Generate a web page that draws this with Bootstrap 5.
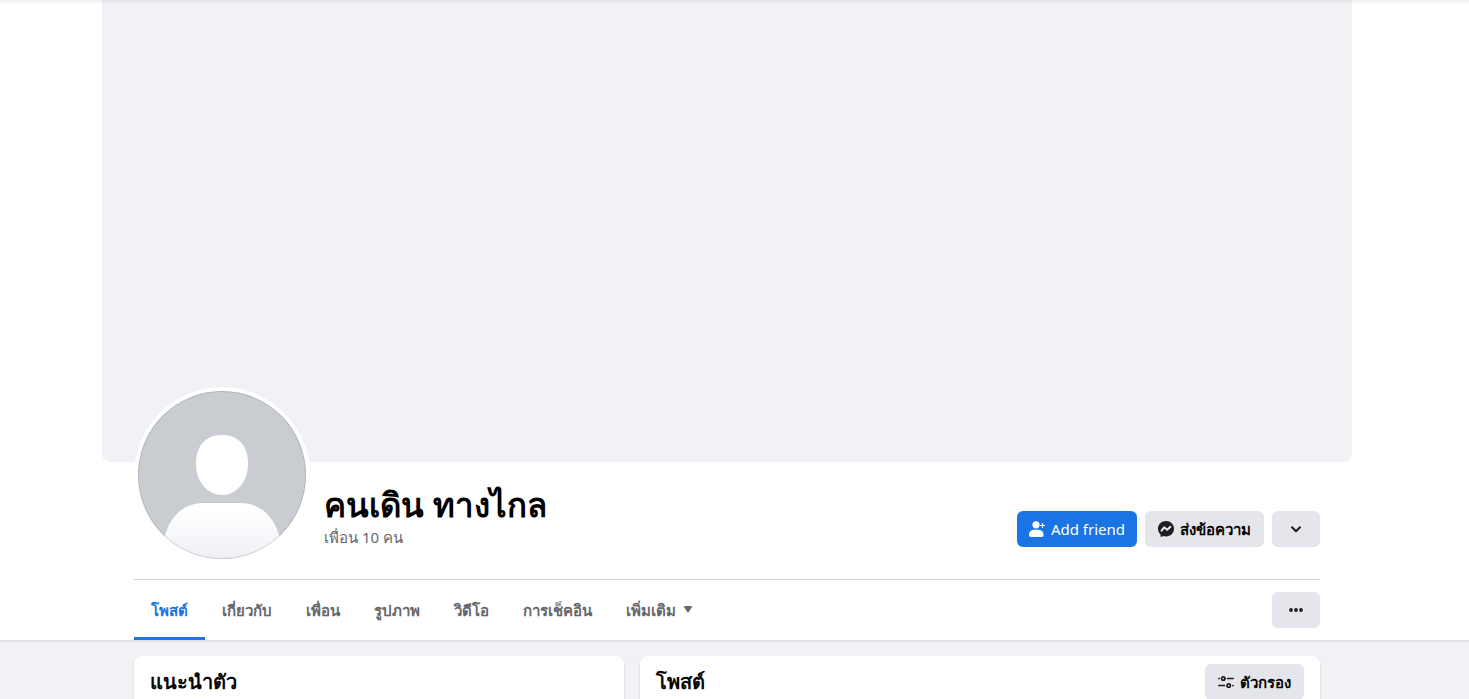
<!DOCTYPE html>
<html lang="th">
<head>
<meta charset="utf-8">
<meta name="viewport" content="width=device-width, initial-scale=1">
<title>คนเดิน ทางไกล</title>
<link href="https://cdn.jsdelivr.net/npm/bootstrap@5.3.0/dist/css/bootstrap.min.css" rel="stylesheet">
<style>
  body { font-family: "Noto Sans", sans-serif; background: #f0f2f5; color: #050505; font-size: 15px; line-height: 20px; }
  .page-shell { position: relative; }
  .page-shell::before { content: ""; position: absolute; inset: 0 0 auto 0; height: 4px; background: linear-gradient(rgba(0,0,0,.07), rgba(0,0,0,0)); }
  .profile-top { background: #fff; border-bottom: 1px solid #dcdee2; box-shadow: 0 1px 1px rgba(0,0,0,.04); padding-right: 15px; }
  .cover-photo { max-width: 1250px; height: 462px; background: #f0f2f5; border-radius: 0 0 8px 8px; }
  .inner-col { max-width: 1186px; }
  .profile-row { gap: 14px; padding-bottom: 16px; border-bottom: 1px solid #ced0d4; }
  .avatar-ring { width: 176px; height: 176px; margin-top: -75px; border: 4px solid #fff; border-radius: 50%; background: #fff; position: relative; }
  .profile-name { font-size: 33px; line-height: 40px; font-weight: 700; color: #000; margin-bottom: 2px; }
  .friend-count { color: #65676b; }
  .friend-count:hover { color: #65676b; }
  .name-block { padding-bottom: 16px; }
  .fb-btn { height: 36px; padding: 0 12px 1px; border: 0; border-radius: 6px; font-size: 15px; line-height: 20px; gap: 6px; white-space: nowrap; }
  .fb-blue { background: #1b74e4; color: #fff; }
  .fb-blue:hover { background: #1a6ed8; color: #fff; }
  .fb-grey { background: #e4e6eb; color: #050505; font-weight: 700; padding: 0 13px; }
  .fb-grey:hover { background: #d8dadf; }
  .fb-square { width: 48px; }
  .profile-tabs .nav-link { height: 60px; padding: 2px 17px 0; border-bottom: 3px solid transparent; color: #65676b; font-weight: 600; display: flex; align-items: center; gap: 8px; }
  .profile-tabs .nav-link.active { color: #1b74e4; border-color: #1b74e4; }
  .feed-grid { display: grid; grid-template-columns: 49fr 68fr; gap: 16px; padding-top: 15px; }
  .feed-shell { padding-right: 15px; }
  .panel-card { background: #fff; border-radius: 8px; box-shadow: 0 1px 2px rgba(0,0,0,.2); min-height: 96px; padding: 8px 16px; }
  .panel-title { font-size: 20px; line-height: 36px; font-weight: 700; color: #050505; }
</style>
</head>
<body>
<div class="page-shell vh-100 overflow-hidden">
  <header class="profile-top">
    <div class="cover-photo mx-auto"></div>
    <div class="inner-col mx-auto">
      <div class="profile-row d-flex align-items-end">
        <div class="avatar-ring flex-shrink-0">
          <svg class="d-block" width="168" height="168" viewBox="0 0 168 168" role="img" aria-label="รูปโปรไฟล์">
            <defs>
              <linearGradient id="bodyFade" x1="0" y1="0" x2="0" y2="1"><stop offset="0.1" stop-color="#fff"/><stop offset="1" stop-color="#eef0f5"/></linearGradient>
              <clipPath id="disc"><circle cx="84" cy="84" r="84"/></clipPath>
            </defs>
            <g clip-path="url(#disc)">
              <rect width="168" height="168" fill="#c9ccd1"/>
              <path d="M84 44C100 44 110 54 110 73C110 91 98 104 84 104C70 104 58 91 58 73C58 54 68 44 84 44Z" fill="#fff"/>
              <path d="M26 168V147C32 125 46 112 66 112H102C122 112 136 125 142 147V168Z" fill="url(#bodyFade)"/>
            </g>
            <circle cx="84" cy="84" r="83.5" fill="none" stroke="#000" stroke-opacity=".12"/>
          </svg>
        </div>
        <div class="name-block flex-grow-1">
          <h1 class="profile-name">คนเดิน ทางไกล</h1>
          <a href="#" class="friend-count text-decoration-none d-block">เพื่อน 10 คน</a>
        </div>
        <div class="d-flex gap-2 pb-3">
          <button type="button" class="btn fb-btn fb-blue d-flex align-items-center">
            <svg width="16" height="16" viewBox="0 0 16 16" fill="#fff" aria-hidden="true"><circle cx="7" cy="3.800" r="3.600"/><path d="M0 14C0 11 2 8.800 5 8.800H9.500C12.500 8.800 14.500 11 14.500 14C14.500 15.300 13.800 16 12.500 16H2C.7 16 0 15.300 0 14Z"/><path d="M13.500 2V7M11 4.500H16" stroke="#fff" stroke-width="1.100"/></svg>
            <span>Add friend</span>
          </button>
          <button type="button" class="btn fb-btn fb-grey d-flex align-items-center">
            <svg width="16" height="16" viewBox="0 0 16 16" aria-hidden="true"><path d="M8 0C3.500 0 0 3.300 0 7.700C0 10 1 12 2.500 13.400V15.200C2.500 15.800 3 16 3.500 15.800L5.300 15C6.200 15.300 7.100 15.400 8 15.400C12.500 15.400 16 12.100 16 7.700S12.500 0 8 0Z" fill="#1c1e21"/><path d="M3.600 9.700L6.100 6.300L9.200 8.800L12.400 5.700" fill="none" stroke="#e4e6eb" stroke-width="2" stroke-linejoin="round" stroke-linecap="round"/></svg>
            <span>ส่งข้อความ</span>
          </button>
          <button type="button" class="btn fb-btn fb-grey fb-square d-flex align-items-center justify-content-center" aria-label="ตัวเลือก">
            <svg width="16" height="16" viewBox="0 0 16 16" fill="none" aria-hidden="true"><path d="M4 6.200L8 10.200L12 6.200" stroke="#1c1e21" stroke-width="2" stroke-linecap="round" stroke-linejoin="round"/></svg>
          </button>
        </div>
      </div>
      <div class="d-flex align-items-center justify-content-between">
        <nav class="nav profile-tabs" aria-label="โปรไฟล์">
          <a class="nav-link active" href="#">โพสต์</a>
          <a class="nav-link" href="#">เกี่ยวกับ</a>
          <a class="nav-link" href="#">เพื่อน</a>
          <a class="nav-link" href="#">รูปภาพ</a>
          <a class="nav-link" href="#">วิดีโอ</a>
          <a class="nav-link" href="#">การเช็คอิน</a>
          <a class="nav-link" href="#">เพิ่มเติม
            <svg width="8" height="7" viewBox="0 0 8 7" aria-hidden="true"><path d="M.8 0H7.200C8 0 8.200.8 7.800 1.300L4.900 5.700Q4 7 3.100 5.700L.2 1.300C-.2.8 0 0 .8 0Z" fill="#65676b"/></svg>
          </a>
        </nav>
        <button type="button" class="btn fb-btn fb-grey fb-square d-flex align-items-center justify-content-center" aria-label="ดูเพิ่มเติม">
          <svg width="16" height="16" viewBox="0 0 16 16" fill="#1c1e21" aria-hidden="true"><circle cx="3" cy="8" r="1.900"/><circle cx="8" cy="8" r="1.900"/><circle cx="13" cy="8" r="1.900"/></svg>
        </button>
      </div>
    </div>
  </header>
  <main class="feed-shell">
    <div class="inner-col mx-auto feed-grid">
      <section class="panel-card">
        <h2 class="panel-title mb-0">แนะนำตัว</h2>
      </section>
      <section class="panel-card d-flex align-items-start justify-content-between">
        <h2 class="panel-title mb-0">โพสต์</h2>
        <button type="button" class="btn fb-btn fb-grey d-flex align-items-center">
          <svg width="16" height="16" viewBox="0 0 16 16" fill="none" stroke="#1c1e21" stroke-width="1.700" stroke-linecap="round" aria-hidden="true"><path d="M.9 4.500H1.100M9.500 4.500H15.100M.9 11.500H6.500M14.900 11.500H15.100"/><circle cx="5.300" cy="4.500" r="1.700"/><circle cx="10.700" cy="11.500" r="1.700"/></svg>
          <span>ตัวกรอง</span>
        </button>
      </section>
    </div>
  </main>
</div>
<script src="https://cdn.jsdelivr.net/npm/bootstrap@5.3.0/dist/js/bootstrap.bundle.min.js"></script>
</body>
</html>
